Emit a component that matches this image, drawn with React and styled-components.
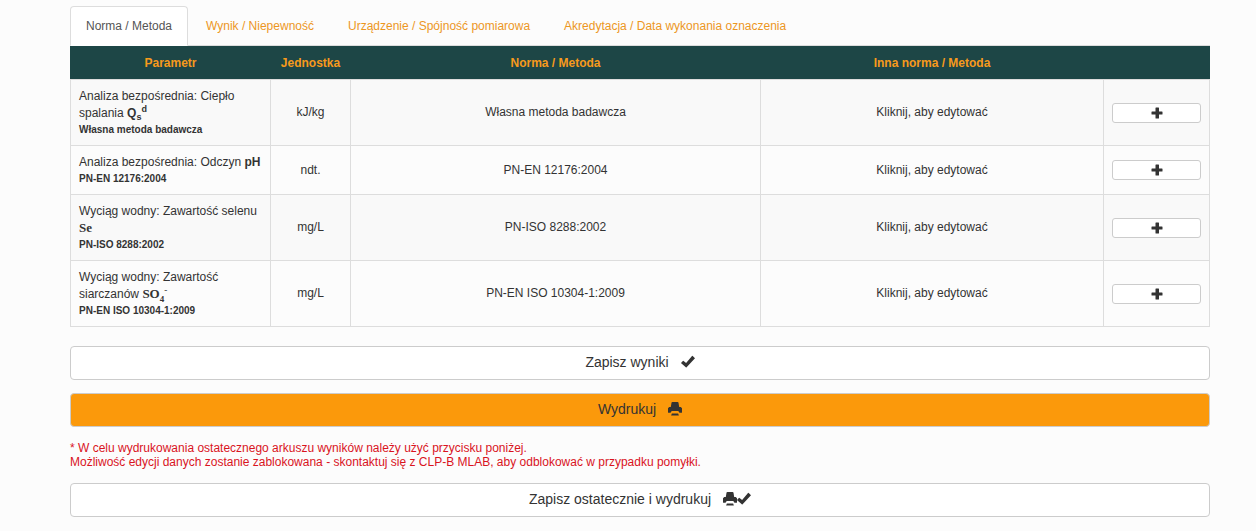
import React, { useState } from 'react';
import styled, { createGlobalStyle } from 'styled-components';

const TABS = [
  'Norma / Metoda',
  'Wynik / Niepewność',
  'Urządzenie / Spójność pomiarowa',
  'Akredytacja / Data wykonania oznaczenia',
];

const ROWS = [
  {
    name: 'Analiza bezpośrednia: Ciepło spalania',
    symbol: <>Q<sub>s</sub><sup>d</sup></>,
    norm: 'Własna metoda badawcza',
    unit: 'kJ/kg',
  },
  {
    name: 'Analiza bezpośrednia: Odczyn',
    symbol: 'pH',
    norm: 'PN-EN 12176:2004',
    unit: 'ndt.',
  },
  {
    name: 'Wyciąg wodny: Zawartość selenu',
    symbol: 'Se',
    norm: 'PN-ISO 8288:2002',
    unit: 'mg/L',
    serif: true,
  },
  {
    name: 'Wyciąg wodny: Zawartość siarczanów',
    symbol: <>SO<sub>4</sub><sup>-</sup></>,
    norm: 'PN-EN ISO 10304-1:2009',
    unit: 'mg/L',
    serif: true,
  },
];

const PlusIcon = () => (
  <Icon $size={12} viewBox='0 0 12 12' aria-hidden='true'>
    <path d='M5 .5h2.500q.5 0 .5.500V4.500h3q.5 0 .5.500v2q0 .5-.5.500H8V11q0 .5-.5.500H5q-.5 0-.5-.500V7.500H1q-.5 0-.5-.500V5q0-.5.5-.500h3.500V1q0-.5.5-.500z' />
  </Icon>
);

const CheckIcon = () => (
  <Icon $size={14} viewBox='0 0 14 14' aria-hidden='true'>
    <path d='M11.700.900 14 3.200 5.600 12.300q-.4.400-.8 0L.200 8.300q-.3-.3 0-.6L1.900 6q.4-.3.700 0l2.500 2.100L11 1q.4-.4.700-.1z' />
  </Icon>
);

const PrintIcon = () => (
  <Icon $size={14} viewBox='0 0 14 14' aria-hidden='true'>
    <path d='M4.300 0h5.400q.6 0 .8.700L11.200 5H2.800L3.500.700Q3.700 0 4.300 0z' />
    <path d='M1.200 5h11.600L14 6.300v3.900q0 .5-.5.500h-2L10.300 9H3.700l-1.200 1.700h-2q-.5 0-.5-.500V6.300z' />
    <path d='M3.900 11.400h6.200l.8 2.100H3.100z' />
  </Icon>
);

const App = () => {
  const [active, setActive] = useState(0);

  return (
    <Page>
      <GlobalStyle />
      <TabList role='tablist'>
        {TABS.map((tab, i) => (
          <Tab
            key={tab}
            type='button'
            role='tab'
            aria-selected={active === i}
            $active={active === i}
            onClick={() => setActive(i)}
          >
            {tab}
          </Tab>
        ))}
      </TabList>
      <Table>
        <colgroup>
          <Col $width='200px' />
          <Col $width='80px' />
          <Col $width='36%' />
          <Col />
          <Col $width='106px' />
        </colgroup>
        <thead>
          <tr>
            <th>Parametr</th>
            <th>Jednostka</th>
            <th>Norma / Metoda</th>
            <th>Inna norma / Metoda</th>
            <th aria-label='Dodaj' />
          </tr>
        </thead>
        <tbody>
          {ROWS.map((row) => (
            <tr key={row.name}>
              <td>
                {row.name} <Formula $serif={row.serif}>{row.symbol}</Formula>
                <Norm>{row.norm}</Norm>
              </td>
              <td>{row.unit}</td>
              <td>{row.norm}</td>
              <td>Kliknij, aby edytować</td>
              <td>
                <AddButton type='button' aria-label='Dodaj'>
                  <PlusIcon />
                </AddButton>
              </td>
            </tr>
          ))}
        </tbody>
      </Table>
      <Actions>
        <Button type='button'>
          Zapisz wyniki
          <Icons>
            <CheckIcon />
          </Icons>
        </Button>
        <Button type='button' $primary>
          Wydrukuj
          <Icons>
            <PrintIcon />
          </Icons>
        </Button>
        <Warning>
          * W celu wydrukowania ostatecznego arkuszu wyników należy użyć przycisku poniżej.
          <br />
          Możliwość edycji danych zostanie zablokowana - skontaktuj się z CLP-B MLAB, aby odblokować
          w przypadku pomyłki.
        </Warning>
        <Button type='button'>
          Zapisz ostatecznie i wydrukuj
          <Icons>
            <PrintIcon />
            <CheckIcon />
          </Icons>
        </Button>
      </Actions>
    </Page>
  );
};

export default App;

const GlobalStyle = createGlobalStyle`
  * {
    box-sizing: border-box;
  }

  body {
    margin: 0;
    background: #fcfcfc;
    color: #333;
    font-family: 'Liberation Sans', Arial, sans-serif;
    font-size: 12px;
    line-height: 17px;
  }

  button {
    font-family: inherit;
    cursor: pointer;
  }
`;

const Page = styled.main`
  padding: 6px 46px 14px 70px;
`;

const TabList = styled.div`
  display: flex;
  gap: 2px;
  border-bottom: 1px solid #ddd;
`;

const Tab = styled.button`
  padding: 11px 15px 10px;
  margin-bottom: -1px;
  border: 1px solid ${(props) => (props.$active ? '#ddd' : 'transparent')};
  border-bottom-color: ${(props) => (props.$active ? '#fff' : 'transparent')};
  border-radius: 4px 4px 0 0;
  background: ${(props) => (props.$active ? '#fff' : 'transparent')};
  color: ${(props) => (props.$active ? '#555' : '#ec971f')};
  font-size: 12px;
  line-height: 17px;
`;

const Table = styled.table`
  width: 100%;
  table-layout: fixed;
  border-collapse: collapse;

  th,
  td {
    padding: 8px;
    border: 1px solid #ddd;
    text-align: center;
    vertical-align: middle;
  }

  th {
    padding-bottom: 7px;
    border-color: #1d4646;
    border-bottom-color: #ddd;
    background: #1d4646;
    color: #f79a1c;
  }

  tbody tr:nth-child(odd) {
    background: #f9f9f9;
  }

  td:first-child {
    text-align: left;
  }
`;

const Col = styled.col`
  width: ${(props) => props.$width || 'auto'};
`;

const Formula = styled.strong`
  font-family: ${(props) => (props.$serif ? "'Liberation Serif', serif" : 'inherit')};
  font-size: ${(props) => (props.$serif ? '13px' : '12px')};
  line-height: 16px;

  sub,
  sup {
    font-size: 9px;
    line-height: 0;
  }
`;

const Norm = styled.strong`
  display: block;
  font-size: 10px;
  line-height: 15px;
`;

const AddButton = styled.button`
  display: flex;
  align-items: center;
  justify-content: center;
  width: 100%;
  height: 20px;
  padding: 0;
  border: 1px solid #ccc;
  border-radius: 3px;
  background: #fff;
`;

const Actions = styled.div`
  display: flex;
  flex-direction: column;
  gap: 13px;
  margin-top: 19px;
`;

const Button = styled.button`
  display: flex;
  align-items: center;
  justify-content: center;
  width: 100%;
  height: 34px;
  padding: 0 12px 2px;
  border: 1px solid #ccc;
  border-radius: 4px;
  background: ${(props) => (props.$primary ? '#fb990b' : '#fff')};
  color: #333;
  font-size: 14px;
`;

const Icons = styled.span`
  display: flex;
  margin-left: 12px;
`;

const Icon = styled.svg`
  width: ${(props) => props.$size}px;
  height: ${(props) => props.$size}px;
  fill: #333;
`;

const Warning = styled.p`
  margin: 0;
  padding: 1px 0;
  color: #d9141e;
  line-height: 14px;
`;
